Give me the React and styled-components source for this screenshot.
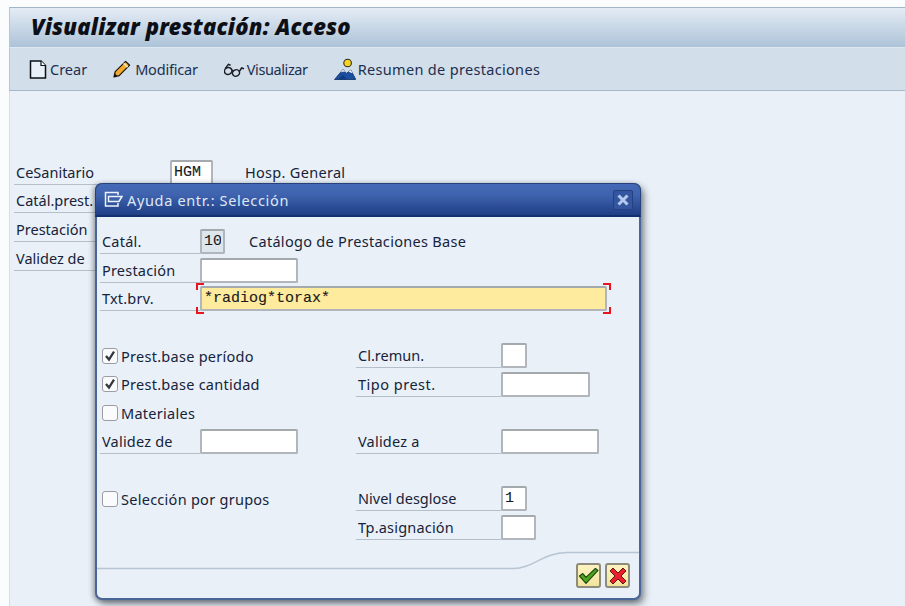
import React from 'react'
import styled, { createGlobalStyle } from 'styled-components'

const GlobalStyle = createGlobalStyle`
  html, body {
    margin: 0;
    height: 100%;
    background: #fafcfe;
    overflow: hidden;
  }
  body {
    font-family: "Noto Sans", "Open Sans", sans-serif;
    font-size: 14.5px;
    letter-spacing: 0.2px;
    color: #16233a;
  }
`

const Shell = styled.div`
  position: relative;
  display: flex;
  flex-direction: column;
  box-sizing: border-box;
  width: 905px;
  height: 606px;
  padding: 7px 0 0 9px;
  overflow: hidden;
`

const TitleBar = styled.div`
  display: flex;
  align-items: center;
  flex: none;
  box-sizing: border-box;
  height: 40px;
  padding: 0 0 4px 21px;
  border-top: 1px solid #a3b5c8;
  border-left: 1px solid #b8c6d4;
  background: linear-gradient(#e4ecf5, #adc3d8);
`

const Title = styled.h1`
  margin: 0;
  font-family: "Noto Sans", "Open Sans", sans-serif;
  font-size: 22px;
  font-weight: 900;
  font-style: italic;
  letter-spacing: 0.2px;
  color: #0c0f16;
`

const Toolbar = styled.div`
  display: flex;
  align-items: center;
  gap: 26px;
  flex: none;
  box-sizing: border-box;
  height: 44px;
  padding-left: 19px;
  border-top: 1px solid #dfe8f0;
  border-left: 1px solid #b8c6d4;
  border-bottom: 1px solid #a8b6c5;
  background: #d2dee9;
`

const ToolButton = styled.div`
  display: flex;
  align-items: center;
  gap: ${p => p.$gap || 4}px;
  letter-spacing: ${p => p.$track || 0}px;
  color: #1b3050;
`

const Content = styled.div`
  flex: 1;
  box-sizing: border-box;
  padding: 67px 0 0 4px;
  border-left: 1px solid #d5dfe9;
  background: #e9f0f7;
`

const BackRow = styled.div`
  display: flex;
  align-items: center;
  height: 28.6px;
`

const BackLabel = styled.div`
  box-sizing: border-box;
  width: 156px;
  height: 25px;
  padding-left: 2px;
  line-height: 24px;
  letter-spacing: 0;
  border-bottom: 1px solid #b4bfca;
`

const Description = styled.span`
  margin-left: ${p => p.$left}px;
  line-height: 25px;
  letter-spacing: ${p => p.$track || 0}px;
`

const Field = styled.input`
  display: block;
  flex: none;
  box-sizing: border-box;
  width: ${p => p.$w}px;
  height: 25px;
  margin: 0;
  padding: 0 2px;
  border: 2px solid #b0b6bb;
  border-top-color: #a4a9ae;
  border-radius: 2px;
  outline: none;
  background: ${p => (p.$tone === 'focus' ? '#feeb9e' : p.$tone === 'off' ? '#dde5ed' : '#fff')};
  font-family: "Liberation Mono", "Courier New", monospace;
  font-size: 15px;
  letter-spacing: 0;
  -webkit-text-stroke: 0.12px #1a1a20;
  color: #1a1a20;
`

const Dialog = styled.section`
  position: absolute;
  left: 95px;
  top: 183px;
  display: flex;
  flex-direction: column;
  box-sizing: border-box;
  width: 546px;
  height: 417px;
  border: 2px solid #4a6699;
  border-top: none;
  border-radius: 7px;
  background: #e9f0f7;
  box-shadow: 3px 4px 7px rgba(40, 45, 55, 0.55), -2px 1px 5px rgba(40, 45, 55, 0.35);
`

const DialogHeader = styled.header`
  display: flex;
  align-items: center;
  flex: none;
  box-sizing: border-box;
  height: 34px;
  margin: 0 -2px;
  padding: 0 7px 0 8px;
  gap: 4px;
  border-radius: 7px 7px 0 0;
  border: 1px solid #27417a;
  border-bottom: 2px solid #142f6e;
  background: linear-gradient(#4469b6, #3f63ae 35%, #1f3e86);
  color: #dfe8f6;
`

const DialogTitle = styled.span`
  flex: 1;
  letter-spacing: 0.66px;
`

const CloseButton = styled.div`
  display: flex;
  align-items: center;
  justify-content: center;
  box-sizing: border-box;
  width: 20px;
  height: 20px;
  border: 1px solid #24407e;
  border-radius: 2px;
  background: #34559f;
`

const FormGrid = styled.div`
  display: grid;
  grid-template-columns: 256px 1fr;
  grid-template-rows: repeat(11, 28.6px);
  padding: 12px 0 0 3px;
`

const Cell = styled.div`
  display: flex;
  align-items: flex-start;
  grid-row: ${p => p.$row};
  grid-column: ${p => p.$col || 1} / span ${p => p.$span || 1};
`

const Label = styled.label`
  flex: none;
  box-sizing: border-box;
  width: ${p => p.$w || 100}px;
  height: 25px;
  padding-left: 2px;
  line-height: 25px;
  letter-spacing: ${p => p.$track ?? 0.2}px;
  border-bottom: 1px solid #b4bfca;
`

const CheckRow = styled.label`
  display: flex;
  align-items: center;
  gap: 3px;
  height: 25px;
  padding-left: 2px;
  letter-spacing: 0.27px;
`

const Box = styled.span`
  display: flex;
  align-items: center;
  justify-content: center;
  box-sizing: border-box;
  width: 16px;
  height: 16px;
  border: 1px solid #9c9ca6;
  border-radius: 3px;
  background: #fafbfc;
`

const FocusWrap = styled.div`
  position: relative;
  flex: none;
`

// red corner hooks around the focused field
const Corner = styled.i`
  position: absolute;
  box-sizing: border-box;
  width: 8px;
  height: 7px;
  border: 0 solid #e8141e;
  ${p => (p.$y === 'top' ? 'top: -3px; border-top-width: 2px;' : 'bottom: -3px; border-bottom-width: 2px;')}
  ${p => (p.$x === 'left' ? 'left: -4px; border-left-width: 2px;' : 'right: -4px; border-right-width: 2px;')}
`

const Footer = styled.footer`
  position: relative;
  display: flex;
  justify-content: flex-end;
  align-items: flex-end;
  gap: 4px;
  flex: none;
  box-sizing: border-box;
  height: 54px;
  margin-top: auto;
  padding: 0 9px 10px 0;
`

const FooterLine = styled.svg`
  position: absolute;
  left: 0;
  top: 0;
  width: 100%;
  height: 100%;
`

const ActionButton = styled.button`
  position: relative;
  display: flex;
  align-items: center;
  justify-content: center;
  box-sizing: border-box;
  width: 25px;
  height: 25px;
  padding: 0;
  border: 2px solid #8d8c7c;
  border-radius: 3px;
  background: linear-gradient(#fdf3c0, #f3e39c);
`

const DocIcon = () => (
  <svg width="18" height="19" viewBox="0 0 18 19">
    <path d="M1.5 1H12L16.5 5.5V18H1.5Z" fill="#e9f1f8" stroke="#0d1116" strokeWidth="1.5" />
    <path d="M12 1V5.5H16.5" fill="#fff" stroke="#0d1116" strokeWidth="1.2" />
  </svg>
)

const PencilIcon = () => (
  <svg width="18" height="18" viewBox="0 0 18 18">
    <path d="M1 17L2.2 11.6L12.6 1.4L16.6 5.2L6.2 15.6Z" fill="#f2a92e" stroke="#17130c" strokeWidth="1.2" strokeLinejoin="round" />
    <path d="M10.6 3.4L14.6 7.2" stroke="#fbe6b0" strokeWidth="1.6" />
    <path d="M1 17L1.8 13.6L4.4 15.9Z" fill="#17130c" />
  </svg>
)

const GlassesIcon = () => (
  <svg width="22" height="17" viewBox="1.4 0 22 17" fill="none" stroke="#1a1e24" strokeWidth="1.5">
    <ellipse cx="5.6" cy="10" rx="3.8" ry="3.4" transform="rotate(-25 5.6 10)" />
    <ellipse cx="13.4" cy="12" rx="3.6" ry="3.2" transform="rotate(-25 13.4 12)" />
    <path d="M9.2 9.6Q10.4 9.2 10.8 10.2" />
    <path d="M2.6 7.6L5.8 3.4L8 4.2" />
    <path d="M16.8 10.4L19 7L21.4 7.8" />
  </svg>
)

const SummaryIcon = () => (
  <svg width="22" height="22" viewBox="0 0 22 22">
    <circle cx="13.6" cy="5" r="3.8" fill="#f7d51e" stroke="#2b2b20" strokeWidth="1.1" />
    <path d="M0.5 21.5L9 11.5L12.4 15.4L16.8 12L21.8 21.5Z" fill="#1a4fa0" stroke="#0e2c63" strokeWidth="0.8" />
    <path d="M6.6 14.4L9 11.5L11.2 14L9 13.4Z" fill="#fff" />
    <path d="M14.6 13.8L16.8 12L18.6 15.2L16.6 14.6Z" fill="#fff" />
    <path d="M4 21.5L9 17L13 21.5Z" fill="#123a7e" />
  </svg>
)

const HelpIcon = () => (
  <svg width="19" height="17" viewBox="0 0 19 17" fill="none" stroke="#eef3fb" strokeWidth="1.5">
    <path d="M14 4V1.5H1.5V15H14V12" />
    <path d="M4.5 5.5H18L15 10.5H4.5Z" fill="#3d60ab" />
  </svg>
)

const CloseIcon = () => (
  <svg width="12" height="12" viewBox="0 0 12 12">
    <path d="M1.5 1.5L10.5 10.5M10.5 1.5L1.5 10.5" stroke="#b4cbee" strokeWidth="3" />
  </svg>
)

const TickMark = () => (
  <svg width="12" height="12" viewBox="0 0 12 12" fill="none">
    <path d="M2 6L5 9.6L10 1.6" stroke="#33383f" strokeWidth="2.3" />
  </svg>
)

const OkIcon = () => (
  <svg width="21" height="18" viewBox="0 0 21 18">
    <path d="M1.5 9L4.8 6.6L8 10.4L17.4 1.5L20 3.4L8 16.4Z" fill="#4ea51d" stroke="#1c4a10" strokeWidth="1.2" strokeLinejoin="round" />
  </svg>
)

const CancelIcon = () => (
  <svg width="18" height="18" viewBox="0 0 18 18">
    <path d="M1 4L4 1L9 6L14 1L17 4L12 9L17 14L14 17L9 12L4 17L1 14L6 9Z" fill="#e8202c" stroke="#6a1518" strokeWidth="1" strokeLinejoin="round" />
  </svg>
)

const backRows = [
  { label: 'CeSanitario', value: 'HGM', desc: 'Hosp. General' },
  { label: 'Catál.prest.' },
  { label: 'Prestación' },
  { label: 'Validez de' },
]

const Check = ({ row, checked, children }) => (
  <Cell $row={row}>
    <CheckRow>
      <Box>{checked && <TickMark />}</Box>
      {children}
    </CheckRow>
  </Cell>
)

const RightField = ({ row, label, w, value, track }) => (
  <Cell $row={row} $col={2}>
    <Label $w={145} $track={track}>{label}</Label>
    <Field $w={w} defaultValue={value} readOnly />
  </Cell>
)

export default function App() {
  return (
    <Shell>
      <GlobalStyle />
      <TitleBar>
        <Title>Visualizar prestación: Acceso</Title>
      </TitleBar>
      <Toolbar>
        <ToolButton $gap={3}><DocIcon />Crear</ToolButton>
        <ToolButton $track={-0.2}><PencilIcon />Modificar</ToolButton>
        <ToolButton $gap={1} $track={-0.4}><GlassesIcon />Visualizar</ToolButton>
        <ToolButton $gap={2} $track={0.32}><SummaryIcon />Resumen de prestaciones</ToolButton>
      </Toolbar>
      <Content>
        {backRows.map(r => (
          <BackRow key={r.label}>
            <BackLabel>{r.label}</BackLabel>
            {r.value && <Field $w={43} defaultValue={r.value} readOnly />}
            {r.desc && <Description $left={32} $track={0.3}>{r.desc}</Description>}
          </BackRow>
        ))}
      </Content>

      <Dialog>
        <DialogHeader>
          <HelpIcon />
          <DialogTitle>Ayuda entr.: Selección</DialogTitle>
          <CloseButton><CloseIcon /></CloseButton>
        </DialogHeader>
        <FormGrid>
          <Cell $row={1} $span={2}>
            <Label>Catál.</Label>
            <Field $w={25} $tone="off" defaultValue="10" readOnly />
            <Description $left={24} $track={0.3}>Catálogo de Prestaciones Base</Description>
          </Cell>
          <Cell $row={2} $span={2}>
            <Label>Prestación</Label>
            <Field $w={98} readOnly />
          </Cell>
          <Cell $row={3} $span={2}>
            <Label>Txt.brv.</Label>
            <FocusWrap>
              <Field $w={407} $tone="focus" defaultValue="*radiog*torax*" readOnly />
              <Corner $x="left" $y="top" />
              <Corner $x="right" $y="top" />
              <Corner $x="left" $y="bottom" />
              <Corner $x="right" $y="bottom" />
            </FocusWrap>
          </Cell>

          <Check row={5} checked>Prest.base período</Check>
          <Check row={6} checked>Prest.base cantidad</Check>
          <Check row={7}>Materiales</Check>
          <Cell $row={8}>
            <Label>Validez de</Label>
            <Field $w={98} readOnly />
          </Cell>
          <Check row={10}>Selección por grupos</Check>

          <RightField row={5} label="Cl.remun." w={26} track={0} />
          <RightField row={6} label="Tipo prest." w={89} track={0.5} />
          <RightField row={8} label="Validez a" w={98} />
          <RightField row={10} label="Nivel desglose" w={26} value="1" track={0} />
          <RightField row={11} label="Tp.asignación" w={35} />
        </FormGrid>
        <Footer>
          <FooterLine viewBox="0 0 542 54" preserveAspectRatio="none">
            <path d="M0 24.5H416C436 24.5 446 8.5 470 8.5H542" fill="none" stroke="#b7c4d4" strokeWidth="1.5" />
          </FooterLine>
          <ActionButton><OkIcon /></ActionButton>
          <ActionButton><CancelIcon /></ActionButton>
        </Footer>
      </Dialog>
    </Shell>
  )
}
